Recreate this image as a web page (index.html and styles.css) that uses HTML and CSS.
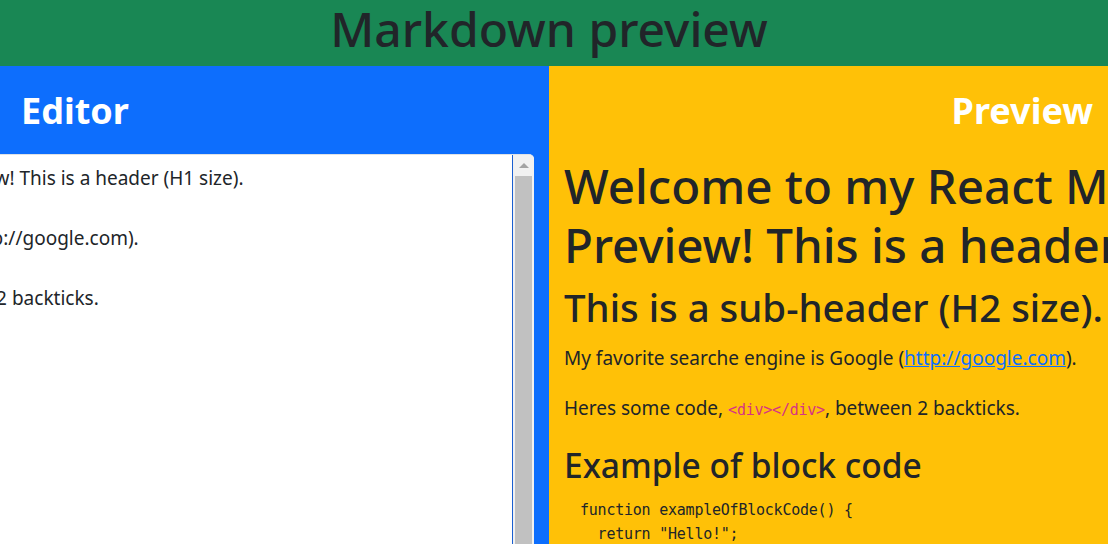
FILE: index.html
```html
<!DOCTYPE html>
<html lang="en">
<head>
<meta charset="utf-8">
<title>Markdown preview</title>
<link rel="stylesheet" href="styles.css">
</head>
<body>
<header class="topbar">
  <h1 class="app-title">Markdown preview</h1>
</header>
<main class="panes">
  <section class="pane pane-editor">
    <h2 class="pane-title">Editor</h2>
    <div class="editor">
      <div class="editor-text"># Welcome to my React Markdown Preview! This is a header (H1 size).
## This is a sub-header (H2 size).
My favorite searche engine is Google (http://google.com).

Heres some code, &#96;&lt;div&gt;&lt;/div&gt;&#96;, between 2 backticks.

### Example of block code
&#96;&#96;&#96;
function exampleOfBlockCode() {
  return "Hello!";
}
&#96;&#96;&#96;</div>
      <div class="scrollbar">
        <span class="scroll-arrow"></span>
        <span class="scroll-thumb"></span>
      </div>
    </div>
  </section>
  <section class="pane pane-preview">
    <h2 class="pane-title pane-title-right">Preview</h2>
    <div class="preview">
      <h1 class="md-h1">Welcome to my React Markdown Preview! This is a header (H1 size).</h1>
      <h2 class="md-h2">This is a sub-header (H2 size).</h2>
      <p class="md-p">My favorite searche engine is Google (<a class="md-link" href="#">http://google.com</a>).</p>
      <p class="md-p">Heres some code, <code class="md-code">&lt;div&gt;&lt;/div&gt;</code>, between 2 backticks.</p>
      <h3 class="md-h3">Example of block code</h3>
      <pre class="md-pre"><code>function exampleOfBlockCode() {
  return "Hello!";
}</code></pre>
    </div>
  </section>
</main>
</body>
</html>
```
FILE: styles.css
```css
html, body {
  margin: 0;
  padding: 0;
  overflow: hidden;
  height: 100%;
}
body {
  font-family: "Noto Sans", "Open Sans", sans-serif;
  font-size: 19px;
  line-height: 1.5;
  color: #212529;
  background: #fff;
}
.topbar {
  background: #198754;
  height: 66px;
  box-sizing: border-box;
  display: flex;
  align-items: center;
  justify-content: center;
  padding: 0 10px 9px 0;
}
.app-title {
  margin: 0;
  font-size: 48px;
  font-weight: 500;
  line-height: 1.2;
  color: #212529;
}
.panes {
  display: grid;
  grid-template-columns: 549px 559px;
  height: calc(100% - 66px);
}
.pane {
  min-width: 0;
  overflow: hidden;
}
.pane-editor {
  background: #0d6efd;
  padding-right: 15px;
}
.pane-preview {
  background: #ffc107;
  padding-left: 15px;
  padding-right: 15px;
}
.pane-title {
  margin: 0;
  padding: 21px 0 19px 21px;
  font-size: 36px;
  font-weight: 700;
  line-height: 48px;
  color: #fff;
}
.pane-title-right {
  text-align: right;
  padding-left: 0;
}
.editor {
  margin-left: -390px;
  height: 420px;
  background: #fff;
  border: 1px solid #dee2e6;
  border-right: 0;
  border-radius: 0 5px 0 0;
  display: flex;
  overflow: hidden;
}
.editor-text {
  flex: 1;
  min-width: 0;
  padding: 8px 15px;
  font-size: 19px;
  line-height: 30px;
  white-space: pre;
  overflow: hidden;
  border-right: 1px solid #1a5fd0;
}
.scrollbar {
  width: 21px;
  background: #f1f1f1;
  display: flex;
  flex-direction: column;
  align-items: center;
}
.scroll-arrow {
  margin-top: 8px;
  width: 0;
  height: 0;
  border-left: 5px solid transparent;
  border-right: 5px solid transparent;
  border-bottom: 5px solid #a3a3a3;
}
.scroll-thumb {
  margin-top: 8px;
  width: 17px;
  flex: 1;
  background: #c1c1c1;
}
.preview {
  width: 860px;
}
.md-h1 {
  margin: 2px 0 10px;
  font-size: 47.5px;
  font-weight: 500;
  line-height: 59px;
}
.md-h2 {
  margin: 0 0 14px;
  font-size: 38.4px;
  font-weight: 500;
  line-height: 46px;
}
.md-p {
  margin: 0 0 21px;
  line-height: 28.5px;
}
.md-link {
  color: #0d6efd;
  text-decoration: underline;
}
.md-code {
  font-family: "DejaVu Sans Mono", "Liberation Mono", monospace;
  font-size: 15px;
  letter-spacing: -0.23px;
  color: #d63384;
}
.md-h3 {
  margin: 0 0 13px;
  font-size: 33.5px;
  font-weight: 500;
  line-height: 40px;
}
.md-pre {
  margin: 0;
  padding-left: 16px;
  font-family: "DejaVu Sans Mono", "Liberation Mono", monospace;
  font-size: 15px;
  letter-spacing: -0.23px;
  line-height: 24px;
  color: #212529;
}
```
